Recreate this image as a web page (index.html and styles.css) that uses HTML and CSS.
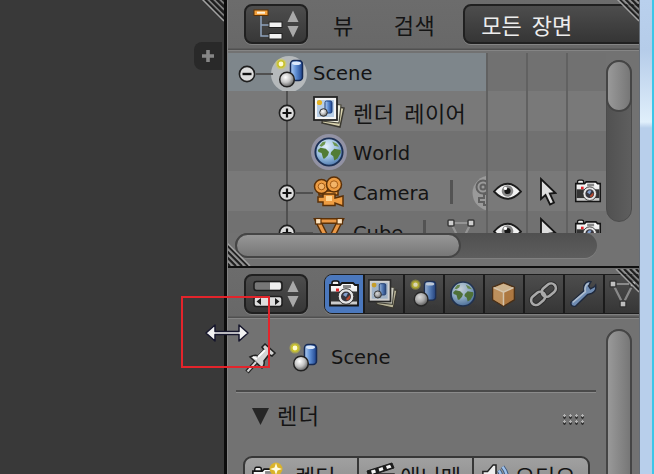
FILE: index.html
```
<!DOCTYPE html>
<html lang="ko">
  <head>
    <meta charset="utf-8" />
    <title>Scene</title>
    <link rel="stylesheet" href="styles.css">
  </head>

  <body>
    <svg class="defs" width="0" height="0">
      <defs>
        <linearGradient id="blue" x1="0" x2="1">
          <stop offset="0" stop-color="#b4d0f4" />
          <stop offset="0.45" stop-color="#5f8fd4" />
          <stop offset="1" stop-color="#1c428c" />
        </linearGradient>
        <radialGradient id="ball" cx="0.4" cy="0.35" r="0.7">
          <stop offset="0" stop-color="#ffffff" />
          <stop offset="0.5" stop-color="#c4c4c4" />
          <stop offset="1" stop-color="#555555" />
        </radialGradient>
        <radialGradient id="sea" cx="0.4" cy="0.3" r="0.8">
          <stop offset="0" stop-color="#e4f1fb" />
          <stop offset="0.5" stop-color="#9cc0e0" />
          <stop offset="1" stop-color="#3d6aa5" />
        </radialGradient>
        <linearGradient id="body" x1="0" y1="0" x2="0" y2="1">
          <stop offset="0" stop-color="#ffffff" />
          <stop offset="1" stop-color="#c6c6c6" />
        </linearGradient>
      </defs>

      <symbol id="i-scene" viewBox="0 0 32 32">
        <rect x="17.5" y="2.5" width="12" height="20" rx="3.5" fill="url(#blue)" stroke="#152a55" stroke-width="1.5" />
        <ellipse cx="23.5" cy="5.2" rx="4.5" ry="1.8" fill="#dce9fb" />
        <circle cx="8" cy="6" r="5.5" fill="#d8d23c" opacity="0.5" />
        <circle cx="8" cy="6" r="3.2" fill="#fffbd0" stroke="#c9c22c" stroke-width="1.6" />
        <circle cx="14" cy="21.5" r="7.3" fill="url(#ball)" stroke="#222" stroke-width="1.5" />
      </symbol>

      <symbol id="i-layers" viewBox="0 0 32 32">
        <path d="M14 9 L31 12 L27 31 L9 27 Z" fill="#d8d2ae" stroke="#3a3830" stroke-width="1.5" />
        <path d="M12 7 L28 9 L26 27 L9 25 Z" fill="#eeeede" stroke="#4a483c" stroke-width="1.2" />
        <rect x="1" y="1" width="23" height="23" fill="#f4f4f4" stroke="#242424" stroke-width="1.8" />
        <rect x="4" y="4" width="17" height="17" fill="#b8cfe8" />
        <rect x="12" y="5" width="7" height="12" rx="1.5" fill="url(#blue)" stroke="#1c3d79" />
        <circle cx="6.5" cy="6.5" r="2.6" fill="#e6b322" />
        <circle cx="10.5" cy="16.5" r="3.8" fill="url(#ball)" stroke="#333" />
      </symbol>

      <symbol id="i-world" viewBox="0 0 32 32">
        <circle cx="16" cy="16" r="12.8" fill="url(#sea)" stroke="#1b3055" stroke-width="1.8" />
        <path d="M5.500 14 L8 12 L13 13 L16 16 L15 19 L12 22 L10.500 22 L9 17 L6 16 Z" fill="#527c35" />
        <path d="M18 16 L21 13 L27 14 L27 17 L24 22 L21 24 L20 20 L17.500 18 Z" fill="#527c35" />
        <path d="M7 10 L10 6.500 L13 6 L12 9 L9 11 Z" fill="#6d9650" />
        <path d="M19 6 L23 8 L25.500 11 L21 10 Z" fill="#6d9650" />
      </symbol>

      <symbol id="i-movie" viewBox="0 0 32 32">
        <g fill="#ee9d43" stroke="#5b3007" stroke-width="1.500">
          <path d="M6 15 H25 V19 H6 Z" />
          <circle cx="8.500" cy="10.500" r="7" />
          <circle cx="21" cy="8.500" r="7.500" />
          <path d="M10 18 H22 V22 L30 20 V30 L22 27 V29.500 H10 V26 H5 V21 H10 Z" />
        </g>
        <g fill="#f3b468" stroke="#a45a13">
          <circle cx="8.500" cy="10.500" r="3.300" />
          <circle cx="21" cy="8.500" r="3.700" />
        </g>
        <path d="M13 20 H19 V25 H13 Z" fill="#ffd594" />
      </symbol>

      <symbol id="i-movie-data" viewBox="0 0 36 36">
        <circle cx="18" cy="18" r="17.500" fill="#a0a0a0" />
        <g fill="none" stroke="#5c5c5c" stroke-width="2">
          <circle cx="11" cy="12" r="6.500" />
          <circle cx="11" cy="12" r="2.500" />
          <circle cx="25" cy="11" r="7" />
          <path d="M7 23 H12 V19 H24 V30 H12 V27 H7 Z" />
        </g>
      </symbol>

      <symbol id="i-mesh" viewBox="0 0 32 32">
        <path d="M5 5 H27 L16 27 Z" fill="none" stroke="#5b3007" stroke-width="6" />
        <path d="M5 5 H27 L16 27 Z" fill="none" stroke="#eb9947" stroke-width="3.200" />
        <g fill="#ffe5c0" stroke="#5b3007" stroke-width="1.200">
          <rect x="2.500" y="2.500" width="5.500" height="5.500" />
          <rect x="24" y="2.500" width="5.500" height="5.500" />
          <rect x="13" y="24" width="5.500" height="5.500" />
        </g>
      </symbol>

      <symbol id="i-mesh-data" viewBox="0 0 32 32">
        <path d="M6 6 H26 L16 26 Z" fill="none" stroke="#9b9b9b" stroke-width="2.200" />
        <g fill="#dedede" stroke="#303030" stroke-width="1.500">
          <rect x="3" y="3" width="6" height="6" rx="1" />
          <rect x="23" y="3" width="6" height="6" rx="1" />
          <rect x="13" y="23" width="6" height="6" rx="1" />
        </g>
      </symbol>

      <symbol id="i-eye" viewBox="0 0 28 20">
        <path d="M1 10 Q14 -5 27 10 Q14 24 1 10 Z" fill="#f2f2f2" stroke="#1c1c1c" stroke-width="1.800" />
        <circle cx="14" cy="9.500" r="5.600" fill="#888" />
        <circle cx="14" cy="9.500" r="3" fill="#151515" />
        <circle cx="12" cy="7" r="1.600" fill="#fff" />
      </symbol>

      <symbol id="i-cursor" viewBox="0 0 18 30">
        <path d="M2 2 V22 L6.500 18 L11 27.500 L15 25.500 L10.800 16.500 L16.500 16 Z" fill="#dedede" stroke="#161616" stroke-width="1.800" />
      </symbol>

      <symbol id="i-photo" viewBox="0 0 32 28">
        <rect x="4" y="1" width="7" height="6" rx="2" fill="#eee" stroke="#111" stroke-width="1.500" />
        <path d="M2 5 H12 L14 3 H25 L27 5 H30 V25.500 H2 Z" fill="url(#body)" stroke="#151515" stroke-width="1.800" />
        <path d="M3 11.500 H29 V21.500 H3 Z" fill="#343434" />
        <rect x="15" y="5" width="8" height="3" fill="#888" />
        <rect x="8" y="8.500" width="3" height="3" fill="#e3262b" />
        <circle cx="18" cy="16.500" r="7.800" fill="#e4e4e4" stroke="#333" />
        <circle cx="18" cy="16.500" r="5" fill="#37363e" />
        <path d="M15 15 A4 4 0 0 1 20 13 L18 17 Z" fill="#839fcb" />
        <path d="M18 19 L22 15 A4 4 0 0 1 19 20.500 Z" fill="#b8492e" />
      </symbol>

      <symbol id="i-cube" viewBox="0 0 32 32">
        <path d="M16 3 L28 8 V22 L16 29 L4 22 V8 Z" fill="#c98642" stroke="#4b2c0f" stroke-width="1.500" />
        <path d="M16 4 L27 8.500 L16 13.500 L5 8.500 Z" fill="#f0d0a2" />
        <path d="M5 9 L16 14 V28 L5 21.500 Z" fill="#dda465" />
        <path d="M5 8.500 L16 13.500 L27 8.500 M16 13.500 V28" fill="none" stroke="#fbe6c9" stroke-width="1.600" />
      </symbol>

      <symbol id="i-chain" viewBox="0 0 32 32">
        <g fill="none" stroke="#292929" stroke-width="4.600">
          <rect x="-5" y="-8" width="10" height="16" rx="5" transform="translate(10.500 20) rotate(50)" />
          <rect x="-5" y="-8" width="10" height="16" rx="5" transform="translate(21.500 11.500) rotate(50)" />
        </g>
        <g fill="none" stroke="#c4c4c4" stroke-width="2.600">
          <rect x="-5" y="-8" width="10" height="16" rx="5" transform="translate(10.500 20) rotate(50)" />
          <rect x="-5" y="-8" width="10" height="16" rx="5" transform="translate(21.500 11.500) rotate(50)" />
        </g>
      </symbol>

      <symbol id="i-wrench" viewBox="0 0 32 32">
        <path d="M3 25 L17 12.500 Q15.500 5 22 2.500 L24.500 3 L22 7.500 L24 10.500 L28.500 8 L29.500 6.500 Q31 15 21 16.500 L8 29 Q3 30 3 25 Z" fill="#7da1d1" stroke="#17243c" stroke-width="1.500" />
        <path d="M5 25 L18.500 13.500 Q17 7 22 4.500" fill="none" stroke="#c9dcf2" stroke-width="1.800" />
      </symbol>

      <symbol id="i-pin" viewBox="0 0 32 32">
        <path d="M2 30 L11 20" stroke="#222" stroke-width="4.500" />
        <path d="M20 2 L30 11 L27 14 L24 12.500 L19 19 Q20 23 17 26 L5 15 Q10 12 13 14 L19 8 L17 5 Z" fill="#d3d3d3" stroke="#222" stroke-width="1.600" />
        <path d="M2.500 29.500 L11 20" stroke="#d8d8d8" stroke-width="2" />
        <path d="M13 15 L20 8 M8 15 L12 17" stroke="#fff" stroke-width="1.800" />
      </symbol>

      <symbol id="i-clap" viewBox="0 0 32 32">
        <path d="M3 12 H29 V30 H3 Z" fill="#e8eef6" stroke="#222" stroke-width="1.500" />
        <path d="M3 14 L8 12 V30 H3 Z" fill="#3d69ae" />
        <path d="M2 9 L27 1 L29 6 L4 14 Z" fill="#1b1b1b" stroke="#1b1b1b" />
        <path d="M6 8.500 L10 7.500 L11 10.500 L7 12 Z M13.500 6.500 L17.500 5 L18.500 8 L14.500 9.500 Z M21 4 L25 2.800 L26.500 5.500 L22 7 Z" fill="#f5f5f5" />
      </symbol>

      <symbol id="i-speaker" viewBox="0 0 32 32">
        <path d="M2 9 H7 L13 2 H16 V28 H14 L7 20 H2 Z" fill="#eee" stroke="#222" stroke-width="1.600" />
        <path d="M19 8 Q24 15 19 23 M23 4 Q32 15 23 27" fill="none" stroke="#3c567c" stroke-width="4.500" />
        <path d="M19 8 Q24 15 19 23 M23 4 Q32 15 23 27" fill="none" stroke="#9fc1ea" stroke-width="2.600" />
      </symbol>

      <symbol id="i-plus" viewBox="0 0 18 18">
        <circle cx="9" cy="9" r="7.600" fill="#dcdcdc" stroke="#1f1f1f" stroke-width="1.600" />
        <path d="M4.500 9 H13.500 M9 4.500 V13.500" stroke="#111" stroke-width="2.200" />
      </symbol>

      <symbol id="i-minus" viewBox="0 0 18 18">
        <circle cx="9" cy="9" r="7.600" fill="#dcdcdc" stroke="#1f1f1f" stroke-width="1.600" />
        <path d="M4.500 9 H13.500" stroke="#111" stroke-width="2.400" />
      </symbol>

      <symbol id="i-arrows" viewBox="0 0 12 28">
        <path d="M6 0.500 L11.500 12 H0.500 Z M6 27.500 L11.500 16 H0.500 Z" fill="#a9a9a9" />
      </symbol>

      <symbol id="i-grip" viewBox="0 0 24 24">
        <g stroke="#1d1d1d" stroke-width="2">
          <path d="M3 0 L24 21 M9 0 L24 15 M15 0 L24 9 M21 0 L24 3" />
        </g>
        <g stroke="#a2a2a2" stroke-width="1.500">
          <path d="M1 0 L24 23" />
          <path d="M6.500 0 L24 17.500 M12.500 0 L24 11.500 M18.500 0 L24 5.500" opacity="0.700" />
        </g>
      </symbol>
    </svg>

    <div class="window">
      <div class="viewport">
        <svg class="grip grip-view"><use href="#i-grip" /></svg>
        <div class="open-tab">
          <svg width="14" height="14"><path d="M7 1 V13 M1 7 H13" stroke="#868686" stroke-width="3.600" /></svg>
        </div>
      </div>

      <div class="editors">
        <div class="outliner">
          <div class="header">
            <div class="selector">
              <svg width="30" height="32" viewBox="0 0 30 32">
                <path d="M8 7 V28 H16 M8 17 H16" fill="none" stroke="#8fa3bd" stroke-width="1.500" />
                <rect x="1" y="2" width="14" height="5.500" fill="#f3a03c" stroke="#5e3205" />
                <path d="M4 4.700 H12" stroke="#fff1d8" stroke-width="2" />
                <rect x="16" y="14" width="13" height="5.500" fill="#f2f2f2" stroke="#222" />
                <rect x="16" y="25.500" width="13" height="5.500" fill="#f2f2f2" stroke="#222" />
              </svg>
              <svg width="12" height="28"><use href="#i-arrows" /></svg>
            </div>
            <span class="menu view">뷰</span>
            <span class="menu search">검색</span>
            <div class="dropdown">모든 장면</div>
            <svg class="grip grip-top"><use href="#i-grip" /></svg>
          </div>

          <div class="outliner-body">
            <div class="tree">
              <div class="row root">
                <div class="name">
                  <svg class="toggle"><use href="#i-minus" /></svg>
                  <div class="icon halo"><svg width="32" height="32"><use href="#i-scene" /></svg></div>
                  <span>Scene</span>
                </div>
                <div class="cell"></div><div class="cell"></div><div class="cell"></div>
              </div>
              <div class="row child">
                <div class="name">
                  <svg class="toggle"><use href="#i-plus" /></svg>
                  <div class="icon"><svg width="32" height="32"><use href="#i-layers" /></svg></div>
                  <span class="ko">렌더 레이어</span>
                </div>
                <div class="cell"></div><div class="cell"></div><div class="cell"></div>
              </div>
              <div class="row child odd">
                <div class="name">
                  <div class="toggle"></div>
                  <div class="icon ring"><svg width="34" height="34"><use href="#i-world" /></svg></div>
                  <span>World</span>
                </div>
                <div class="cell"></div><div class="cell"></div><div class="cell"></div>
              </div>
              <div class="row child linked">
                <div class="name">
                  <svg class="toggle"><use href="#i-plus" /></svg>
                  <div class="icon"><svg width="32" height="32"><use href="#i-movie" /></svg></div>
                  <span>Camera</span>
                  <i class="bar"></i>
                  <svg class="data" width="36" height="36"><use href="#i-movie-data" /></svg>
                </div>
                <div class="cell"><svg width="29" height="21"><use href="#i-eye" /></svg></div>
                <div class="cell"><svg width="18" height="30"><use href="#i-cursor" /></svg></div>
                <div class="cell"><svg width="28" height="25"><use href="#i-photo" /></svg></div>
              </div>
              <div class="row child linked odd">
                <div class="name">
                  <svg class="toggle"><use href="#i-plus" /></svg>
                  <div class="icon"><svg width="32" height="32"><use href="#i-mesh" /></svg></div>
                  <span>Cube</span>
                  <i class="bar"></i>
                  <svg class="data" width="32" height="32"><use href="#i-mesh-data" /></svg>
                </div>
                <div class="cell"><svg width="29" height="21"><use href="#i-eye" /></svg></div>
                <div class="cell"><svg width="18" height="30"><use href="#i-cursor" /></svg></div>
                <div class="cell"><svg width="28" height="25"><use href="#i-photo" /></svg></div>
              </div>
            </div>
            <div class="vscroll"><div class="vthumb"></div></div>
          </div>
          <div class="hscroll"><div class="hthumb"></div></div>
          <svg class="grip grip-bottom"><use href="#i-grip" /></svg>
        </div>

        <div class="properties">
          <div class="header">
            <div class="selector">
              <svg width="30" height="28" viewBox="0 0 30 28">
                <rect x="1" y="1.500" width="28" height="9" rx="2.500" fill="#777" stroke="#1c1c1c" stroke-width="1.500" />
                <path d="M17 2.500 H27 Q28 3 28 6 Q28 9 27 9.500 H17 Z" fill="#eee" />
                <rect x="1" y="16.500" width="28" height="10" rx="2.500" fill="#dedede" stroke="#1c1c1c" stroke-width="1.500" />
                <path d="M8 18 V25 L3.500 21.500 Z M22 18 V25 L26.500 21.500 Z" fill="#1c1c1c" />
              </svg>
              <svg width="12" height="28"><use href="#i-arrows" /></svg>
            </div>
            <div class="tabs">
              <div class="tab active"><svg width="32" height="28"><use href="#i-photo" /></svg></div>
              <div class="tab"><svg width="30" height="30"><use href="#i-layers" /></svg></div>
              <div class="tab"><svg width="30" height="30"><use href="#i-scene" /></svg></div>
              <div class="tab"><svg width="30" height="30"><use href="#i-world" /></svg></div>
              <div class="tab"><svg width="29" height="29"><use href="#i-cube" /></svg></div>
              <div class="tab"><svg width="31" height="31"><use href="#i-chain" /></svg></div>
              <div class="tab"><svg width="30" height="30"><use href="#i-wrench" /></svg></div>
              <div class="tab"><svg width="32" height="32"><use href="#i-mesh-data" /></svg></div>
            </div>
            <svg class="grip grip-props"><use href="#i-grip" /></svg>
          </div>

          <div class="props-body">
            <div class="panels">
              <div class="context">
                <svg width="32" height="32"><use href="#i-pin" /></svg>
                <svg width="32" height="32"><use href="#i-scene" /></svg>
                <span>Scene</span>
              </div>
              <div class="panel-title">
                <svg width="17" height="17"><path d="M0 0 H17 L8.500 17 Z" fill="#262626" /></svg>
                <span class="ko">렌더</span>
                <div class="dots"></div>
              </div>
              <div class="buttons">
                <div class="button">
                  <svg width="34" height="32" viewBox="0 0 34 32">
                    <svg y="4" width="30" height="27"><use href="#i-photo" /></svg>
                    <circle cx="25" cy="7" r="6.500" fill="#dab32a" />
                    <path d="M25 1 L26.500 5.500 L31 7 L26.500 8.500 L25 13 L23.500 8.500 L19 7 L23.500 5.500 Z" fill="#fffbe0" />
                  </svg>
                  <span class="ko">렌더</span>
                </div>
                <div class="button">
                  <svg width="32" height="32"><use href="#i-clap" /></svg>
                  <span class="ko">애니메</span>
                </div>
                <div class="button">
                  <svg width="32" height="30"><use href="#i-speaker" /></svg>
                  <span class="ko">오디오</span>
                </div>
              </div>
            </div>
            <div class="vscroll long"><div class="vthumb"></div></div>
          </div>
        </div>
      </div>

      <div class="frame"></div>

      <div class="marker"></div>
      <svg class="resize" width="46" height="20" viewBox="0 0 46 20">
        <path d="M2 10 L11 2 V8.500 H35 V2 L44 10 L35 18 V11.500 H11 V18 Z" fill="#f2f2f2" stroke="#16162c" stroke-width="1.500" stroke-linejoin="round" />
      </svg>
    </div>
  </body>
</html>
```
FILE: styles.css
```
* {
  box-sizing: border-box;
}

body {
  margin: 0;
  overflow: hidden;
  font-family: "DejaVu Sans", "Noto Sans CJK KR", sans-serif;
  font-size: 19.5px;
  font-kerning: none;
  color: #141414;
}

svg {
  display: block;
  flex-shrink: 0;
}

.defs {
  position: absolute;
}

.window {
  position: relative;
  display: flex;
  width: 654px;
  height: 474px;
  overflow: hidden;
}

.viewport {
  position: relative;
  width: 227px;
  background-color: #393939;
  border-right: 3px solid #0c0c0c;
  padding-top: 42px;
}

.open-tab {
  display: flex;
  align-items: center;
  justify-content: center;
  width: 28px;
  height: 28px;
  margin-left: auto;
  margin-right: 2px;
  background-color: #292929;
  border-radius: 8px 0 0 8px;
}

.editors {
  width: 412px;
  background-color: #727272;
  border-left: 1px solid #838383;
  overflow: hidden;
}

.frame {
  width: 15px;
  background: linear-gradient(#b9d0ed 0, #b5cce9 50px, #e0effb 122px, #b8cfeb 128px, #b8cfeb 100%);
  border-left: 1px solid #666e78;
  border-right: 2px solid #3cc6e8;
}

.header {
  position: relative;
  display: flex;
  align-items: center;
  height: 52px;
  padding: 0 0 4px 16px;
  background: linear-gradient(#6c6c6c, #686868 48px, #505050 49px, #505050 50px, #858585 50px, #858585 51px, #727272 51px);
  overflow: hidden;
}

.selector {
  display: flex;
  align-items: center;
  justify-content: space-between;
  flex-shrink: 0;
  width: 64px;
  height: 40px;
  padding: 0 7px;
  border: 2px solid #202020;
  border-radius: 8px;
  background: linear-gradient(#4d4d4d, #373737);
  box-shadow: 0 1px 0 #818181;
}

.menu,
.dropdown,
.ko {
  font-family: "Noto Sans CJK KR", sans-serif;
  font-size: 22px;
  line-height: 32px;
  letter-spacing: 0.5px;
  word-spacing: 3px;
  white-space: nowrap;
}

.view {
  margin-left: 25px;
}

.search {
  margin-left: 40px;
}

.dropdown {
  margin-left: 28px;
  width: 190px;
  height: 40px;
  flex-shrink: 0;
  padding-left: 16px;
  line-height: 36px;
  letter-spacing: 0;
  word-spacing: 4px;
  color: #ededed;
  border: 2px solid #202020;
  border-radius: 8px;
  background: linear-gradient(#4d4d4d, #353535);
  box-shadow: 0 1px 0 #858585;
}

/* outliner */
.outliner {
  position: relative;
  height: 268px;
  border-bottom: 2px solid #101010;
}

.outliner-body {
  display: flex;
  height: 181px;
}

.tree {
  width: 378px;
  padding-top: 1px;
  overflow: hidden;
}

.row {
  position: relative;
  display: flex;
  height: 40px;
  background-color: #797979;
}

.odd {
  background-color: #717171;
}

.root {
  height: 38px;
  background-color: #717171;
}

.root .name {
  padding-left: 10px;
  padding-top: 3px;
  background-color: #7e868b;
}

.name {
  display: flex;
  align-items: center;
  width: 258px;
  padding-left: 50px;
  padding-top: 4px;
  overflow: hidden;
}

.name .toggle {
  position: relative;
  width: 18px;
  height: 18px;
  margin-right: 15px;
}

.name .ko {
  margin-bottom: 3px;
}

.icon {
  position: relative;
  display: flex;
  align-items: center;
  justify-content: center;
  flex-shrink: 0;
  width: 36px;
  height: 36px;
  margin-right: 6px;
}

.halo {
  border-radius: 50%;
  background-color: rgba(225, 228, 228, 0.55);
}

.ring {
  border-radius: 50%;
  background-color: #9292a4;
}

.child .icon {
  margin-top: -2px;
}

/* branch lines */
.child::before {
  content: "";
  position: absolute;
  left: 58px;
  top: 0;
  width: 2px;
  height: 40px;
  background-color: #505050;
}

.root::after,
.linked::after {
  content: "";
  position: absolute;
  left: 28px;
  top: 20px;
  width: 17px;
  height: 2px;
  background-color: #505050;
}

.linked::after {
  left: 68px;
  top: 21px;
}

.bar {
  width: 3px;
  height: 24px;
  margin: 0 19px 3px 20px;
  background-color: #535353;
  flex-shrink: 0;
}

.data {
  opacity: 0.85;
}

.cell {
  display: flex;
  align-items: center;
  justify-content: center;
  width: 40px;
  padding: 1px 0 0 1px;
  border-left: 2px solid #616161;
}

.vscroll {
  width: 26px;
  height: 162px;
  margin-top: 8px;
  border: 1px solid #4c4c4c;
  border-radius: 13px;
  background: linear-gradient(90deg, #515151, #5e5e5e);
  flex-shrink: 0;
}

.vthumb {
  width: 26px;
  height: 52px;
  margin: -1px;
  border: 2px solid #454545;
  border-radius: 13px;
  background: linear-gradient(90deg, #999999, #777777);
}

.hscroll {
  position: relative;
  width: 362px;
  height: 25px;
  margin-left: 7px;
  border-radius: 13px;
  background: linear-gradient(#505050, #5d5d5d);
  box-shadow: 0 1px 0 #808080;
}

.hthumb {
  width: 226px;
  height: 25px;
  border: 2px solid #454545;
  border-radius: 13px;
  background: linear-gradient(#979797, #777777);
}

/* properties */
.properties .header {
  height: 53px;
  padding-bottom: 1px;
}

.tabs {
  display: flex;
  flex-shrink: 0;
  width: 330px;
  height: 40px;
  margin-left: 16px;
  border: 1px solid #1d1d1d;
  border-radius: 8px 0 0 8px;
  overflow: hidden;
  box-shadow: 0 1px 0 #808080;
}

.tab {
  display: flex;
  align-items: center;
  justify-content: center;
  flex-shrink: 0;
  width: 40px;
  padding-right: 2px;
  border-right: 2px solid #1b1b1b;
  background: linear-gradient(#4d4d4d, #363636);
}

.tab svg {
  opacity: 0.8;
}

.active {
  padding-right: 0;
  background: #4b78bd;
}

.active svg {
  opacity: 1;
}

.props-body {
  display: flex;
  height: 153px;
}

.panels {
  width: 378px;
  padding-left: 8px;
}

.context {
  display: flex;
  align-items: center;
  width: 360px;
  height: 71px;
  padding: 4px 0 0 9px;
  border-bottom: 2px solid #4a4a4a;
  box-shadow: 0 1px 0 #8b8b8b;
}

.context svg + svg {
  margin-left: 10px;
}

.context span {
  margin-left: 12px;
}

.panel-title {
  display: flex;
  align-items: center;
  width: 360px;
  height: 48px;
  padding-left: 16px;
}

.panel-title .ko {
  margin: 0 0 4px 8px;
  letter-spacing: 1.5px;
}

.dots {
  width: 24px;
  height: 12px;
  margin: 8px 9px 0 auto;
  background: radial-gradient(circle at 1.5px 1.5px, #b4b4b4 1px, transparent 1.4px) 0 0 / 6px 6px,
    radial-gradient(circle at 1.5px 3.5px, #333333 1px, transparent 1.6px) 0 0 / 6px 6px;
}

.buttons {
  display: flex;
  width: 347px;
  height: 40px;
  margin: 16px 0 0 7px;
  border: 2px solid #373737;
  border-radius: 9px;
  background: linear-gradient(#a0a0a0, #8b8b8b);
}

.button {
  display: flex;
  align-items: center;
  width: 115px;
  padding: 3px 0 0 6px;
  border-right: 2px solid #373737;
}

.button:last-child {
  border-right: 0;
}

.button .ko {
  margin: 0 0 5px 3px;
  letter-spacing: 0;
}

.button:first-child .ko {
  margin-left: 10px;
}

.long {
  height: 200px;
}

.long .vthumb {
  height: 200px;
}

/* area corners */
.grip {
  position: absolute;
  width: 24px;
  height: 24px;
}

.grip-view {
  right: 0;
  top: -2px;
}

.grip-top {
  right: 0;
  top: -2px;
}

.grip-bottom {
  left: -1px;
  bottom: 0;
  transform: rotate(180deg);
}

.grip-props {
  right: 0;
  top: 1px;
}

.marker {
  position: absolute;
  left: 181px;
  top: 296px;
  width: 89px;
  height: 72px;
  border: 2px solid #e3242b;
}

.resize {
  position: absolute;
  left: 204px;
  top: 323px;
}
```
